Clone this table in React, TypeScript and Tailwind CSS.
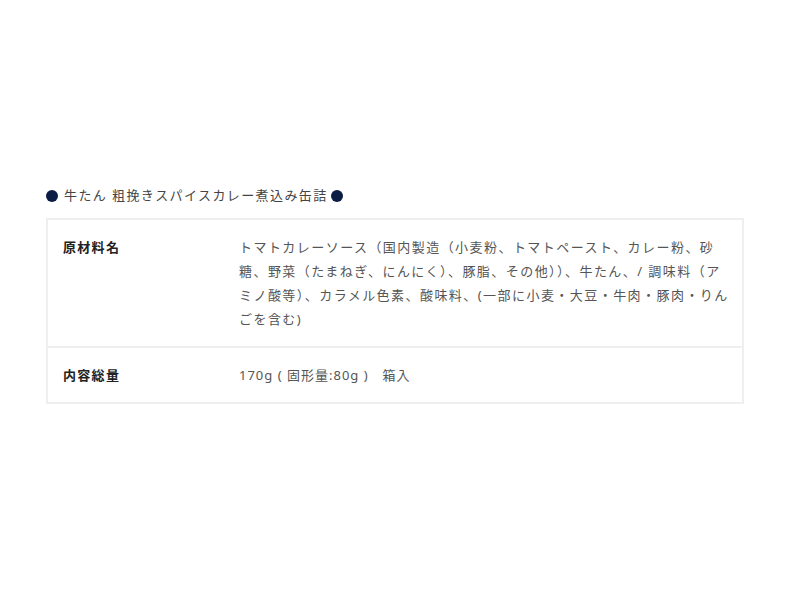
export default function App() {
  const font = { fontFamily: '"Noto Sans", "Noto Sans CJK JP", sans-serif' };
  return (
    <div className="w-[800px] h-[600px] bg-white" style={font}>
      <div className="pt-[184px] pl-[46px] w-[744px]">
        <div className="flex items-center h-[24px] text-[13px] tracking-[1.4px] text-[#444]">
          <span className="inline-block w-[12px] h-[12px] rounded-full bg-[#0c1d45] mr-[6px]"></span>
          <span>牛たん 粗挽きスパイスカレー煮込み缶詰</span>
          <span className="inline-block w-[12px] h-[12px] rounded-full bg-[#0c1d45] ml-[3px]"></span>
        </div>
        <div className="mt-[10px] border-2 border-[#efefef] w-[698px]">
          <div className="flex border-b-2 border-[#efefef] py-[15px]">
            <div className="w-[191px] shrink-0 pl-[15px] text-[13px] leading-[24px] font-bold text-[#222] tracking-[1.3px]">
              原材料名
            </div>
            <div className="w-[490px] text-[13px] leading-[24px] text-[#555] tracking-[1.45px]">
              トマトカレーソース（国内製造（小麦粉、トマトペースト、カレー粉、砂糖、野菜（たまねぎ、にんにく）、豚脂、その他））、牛たん、/ 調味料（アミノ酸等）、カラメル色素、酸味料、(一部に小麦・大豆・牛肉・豚肉・りんごを含む)
            </div>
          </div>
          <div className="flex py-[15px]">
            <div className="w-[191px] shrink-0 pl-[15px] text-[13px] leading-[24px] font-bold text-[#222] tracking-[1.3px]">
              内容総量
            </div>
            <div className="text-[13px] leading-[24px] text-[#555] tracking-[1px]">
              170g ( 固形量:80g )　箱入
            </div>
          </div>
        </div>
      </div>
    </div>
  );
}
